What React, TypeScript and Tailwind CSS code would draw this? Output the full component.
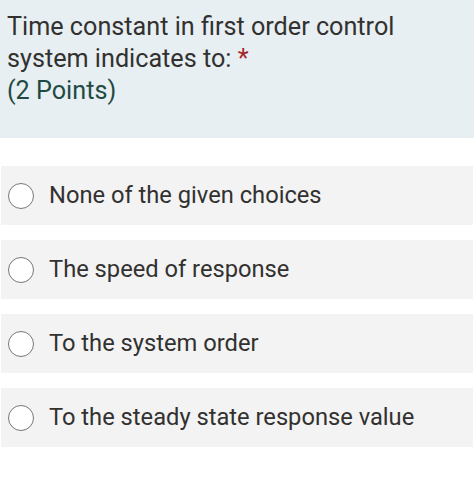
const options = [
  "None of the given choices",
  "The speed of response",
  "To the system order",
  "To the steady state response value",
];

const App = () => {
  return (
    <div className="w-[474px] h-[500px] bg-white font-['Roboto',sans-serif]">
      <div className="bg-[#e7eff2] pt-[11px] pb-[31px] pl-[7px] text-[25.2px] leading-[32px] text-[#323130]">
        <div>
          Time constant in first order control system indicates to:{" "}
          <span className="text-[#a4262c]">*</span>
        </div>
        <div className="text-[#1f4a44]">(2 Points)</div>
      </div>

      <div className="mt-[28px] flex flex-col gap-[15px] px-[1px]">
        {options.map((opt, idx) => (
          <div
            key={idx}
            className="flex h-[59px] items-center bg-[#f3f3f3] pl-[7px]"
          >
            <span className="h-[26px] w-[26px] shrink-0 rounded-full border-[1.5px] border-[#777] bg-white"></span>
            <span className="ml-[15px] text-[23.7px] text-[#323130]">{opt}</span>
          </div>
        ))}
      </div>
    </div>
  );
};

export default App;
